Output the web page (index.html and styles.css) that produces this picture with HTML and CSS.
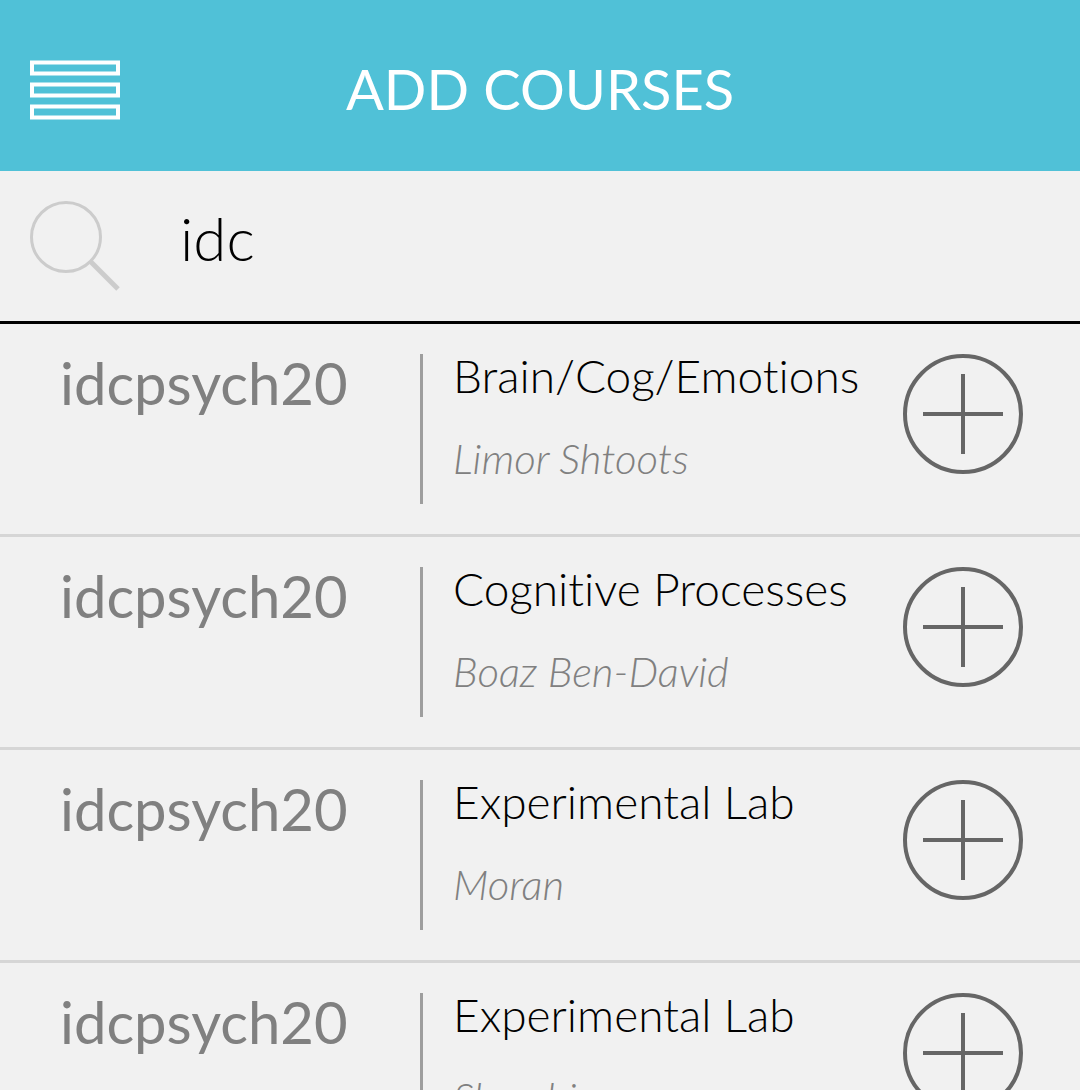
FILE: index.html
```html
<!DOCTYPE html>
<html lang="en">
<head>
<meta charset="utf-8">
<meta name="viewport" content="width=device-width, initial-scale=1">
<title>Add Courses</title>
<link rel="stylesheet" href="styles.css">
</head>
<body>
<header class="topbar">
  <button class="icon-button" type="button" aria-label="Menu">
    <svg class="menu-icon" viewBox="0 0 90 60" aria-hidden="true">
      <path d="M2 2.500H88V13.500H2ZM2 24.500H88V35.500H2ZM2 46.500H88V57.500H2Z"/>
    </svg>
  </button>
  <h1 class="title">ADD COURSES</h1>
</header>
<form class="search" role="search">
  <label class="search-label" for="query" aria-label="Search courses">
    <svg class="search-icon" viewBox="0 0 90 90" aria-hidden="true">
      <circle cx="36" cy="36" r="34.500" stroke-width="3"/>
      <path d="M61 61L88 88" stroke-width="5"/>
    </svg>
  </label>
  <input class="search-input" id="query" type="text" value="idc" autocomplete="off" spellcheck="false">
</form>
<main>
  <ul class="courses">
    <li class="course">
      <p class="code">idcpsych20</p>
      <div class="details"><h2 class="name">Brain/Cog/Emotions</h2><p class="teacher">Limor Shtoots</p></div>
      <button class="add" type="button" aria-label="Add Brain/Cog/Emotions"><svg class="add-icon" viewBox="0 0 120 120" aria-hidden="true"><circle cx="60" cy="60" r="58"/><path d="M20 60H100M60 20V100"/></svg></button>
    </li>
    <li class="course">
      <p class="code">idcpsych20</p>
      <div class="details"><h2 class="name">Cognitive Processes</h2><p class="teacher">Boaz Ben-David</p></div>
      <button class="add" type="button" aria-label="Add Cognitive Processes"><svg class="add-icon" viewBox="0 0 120 120" aria-hidden="true"><circle cx="60" cy="60" r="58"/><path d="M20 60H100M60 20V100"/></svg></button>
    </li>
    <li class="course">
      <p class="code">idcpsych20</p>
      <div class="details"><h2 class="name">Experimental Lab</h2><p class="teacher">Moran</p></div>
      <button class="add" type="button" aria-label="Add Experimental Lab"><svg class="add-icon" viewBox="0 0 120 120" aria-hidden="true"><circle cx="60" cy="60" r="58"/><path d="M20 60H100M60 20V100"/></svg></button>
    </li>
    <li class="course">
      <p class="code">idcpsych20</p>
      <div class="details"><h2 class="name">Experimental Lab</h2><p class="teacher">Sharshi</p></div>
      <button class="add" type="button" aria-label="Add Experimental Lab"><svg class="add-icon" viewBox="0 0 120 120" aria-hidden="true"><circle cx="60" cy="60" r="58"/><path d="M20 60H100M60 20V100"/></svg></button>
    </li>
  </ul>
</main>
</body>
</html>
```
FILE: styles.css
```css
* {
  box-sizing: border-box;
}

html {
  scrollbar-width: none;
}

body {
  margin: 0;
  background: #f1f1f1;
  color: #000;
  font-family: Lato, "Open Sans", sans-serif;
  font-weight: 300;
  font-variant-ligatures: none;
}

button {
  padding: 0;
  border: 0;
  background: none;
  cursor: pointer;
}

svg {
  display: block;
  fill: none;
}

.topbar {
  display: grid;
  grid-template-columns: 90px 1fr 90px;
  align-items: center;
  padding: 50px 30px 41px;
  background: #50c1d7;
  color: #fff;
}

.menu-icon {
  width: 90px;
  height: 60px;
  stroke: #fff;
  stroke-width: 4;
}

.title {
  margin: 0;
  padding-bottom: 2px;
  font-size: 56px;
  line-height: 78px;
  font-weight: 400;
  text-align: center;
  white-space: nowrap;
}

.search {
  display: flex;
  align-items: center;
  gap: 60px;
  padding: 30px;
  border-bottom: 3px solid #000;
}

.search-icon {
  width: 90px;
  height: 90px;
  stroke: #ccc;
}

.search-input {
  flex: 1;
  min-width: 0;
  height: 90px;
  padding: 0 0 16px;
  border: 0;
  outline: 0;
  background: none;
  color: inherit;
  font: inherit;
  font-size: 60px;
}

.courses {
  margin: 0;
  padding: 0;
  list-style: none;
}

.course {
  display: grid;
  grid-template-columns: 360px minmax(0, 1fr) 120px;
  padding: 30px 57px 30px 60px;
  border-bottom: 3px solid #d6d6d6;
}

.code {
  margin: 0;
  color: #808080;
  font-size: 58px;
  line-height: 58px;
  font-weight: 400;
}

.details {
  min-height: 150px;
  padding-left: 30px;
  border-left: 3px solid #9e9e9e;
  white-space: nowrap;
}

.name {
  margin: 0 0 32px;
  font-size: 46px;
  line-height: 44px;
  font-weight: 300;
}

.teacher {
  margin: 0;
  color: #808080;
  font-size: 42px;
  line-height: 56px;
  font-style: italic;
}

.add {
  align-self: start;
}

.add-icon {
  width: 120px;
  height: 120px;
  stroke: #666;
  stroke-width: 4;
}
```
